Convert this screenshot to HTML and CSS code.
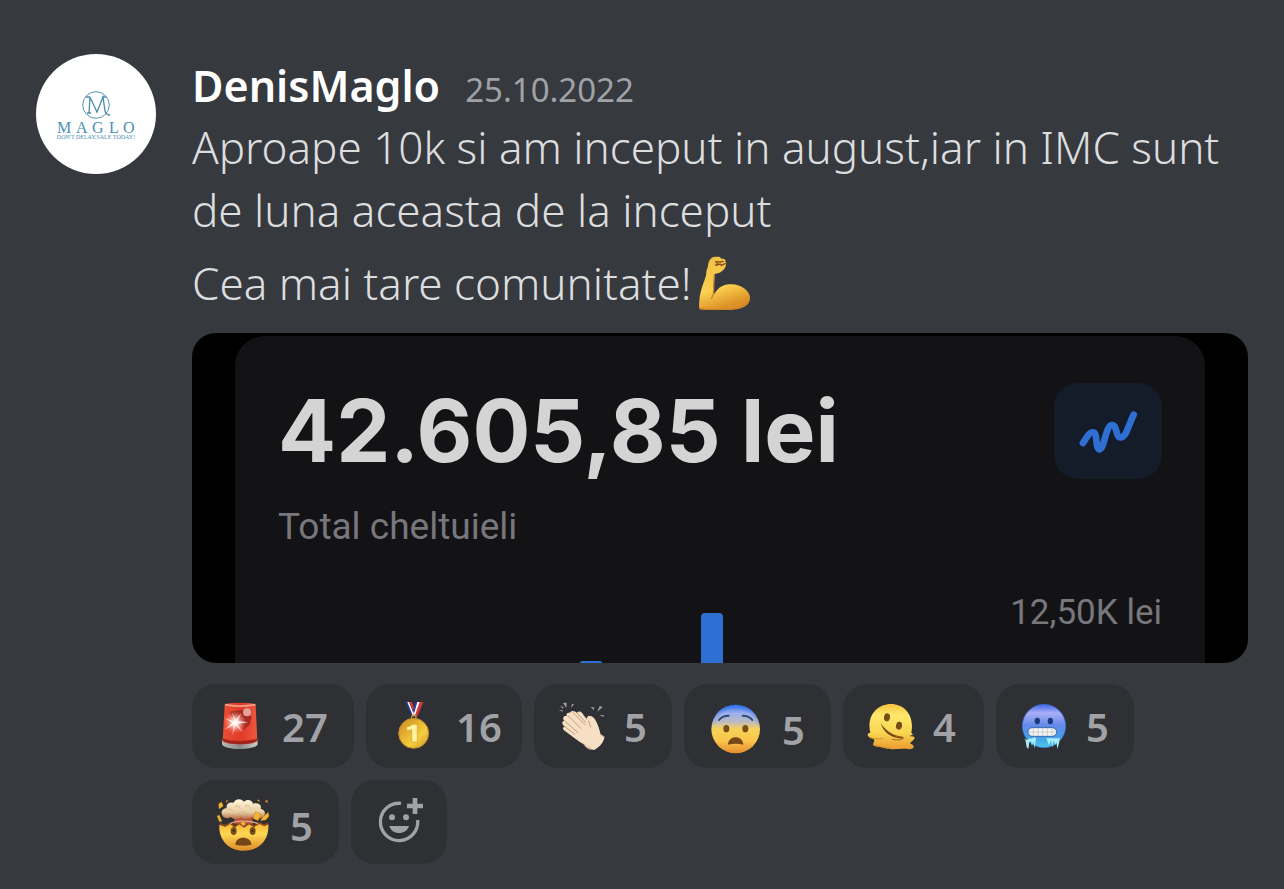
FILE: index.html
```
<!DOCTYPE html>
<html lang="ro">
<head>
  <meta charset="UTF-8" />
  <meta name="viewport" content="width=device-width, initial-scale=1.0"/>
  <title>DenisMaglo</title>
  <link rel="stylesheet" href="styles.css">
</head>
<body>
  <article class="message">
    <svg class="avatar" viewBox="0 0 120 120" role="img" aria-label="Maglo">
      <circle cx="60" cy="60" r="60" fill="#fff"/>
      <circle cx="60" cy="51" r="13.3" fill="none" stroke="#5b94b0" stroke-width="1"/>
      <path d="M51 59h4M53 59L54 43L61 58L67 43L69 57Q70 61 74 61M50 43h4M66 43h4" fill="none" stroke="#4f8dac" stroke-width="1.3"/>
      <g fill="#4a8fb5" font-family="Liberation Serif, serif">
        <text font-size="16" x="21 40 56 73 87" y="79">MAGLO</text>
        <text class="tagline" x="60" y="85" text-anchor="middle">DON'T DELAY,SALE TODAY!</text>
      </g>
    </svg>

    <div class="content">
      <header>
        <h1>DenisMaglo</h1>
        <time datetime="2022-10-25">25.10.2022</time>
      </header>
      <p>Aproape 10k si am inceput in august,iar in IMC sunt de luna aceasta de la inceput</p>
      <p class="last">Cea mai tare comunitate!<svg class="biceps" viewBox="0 0 162 162" role="img" aria-label="biceps">
        <defs>
          <linearGradient id="arm" x1="0" y1="0" x2="0.3" y2="1">
            <stop offset="0" stop-color="#f0bd45"/><stop offset=".65" stop-color="#fbd04f"/><stop offset="1" stop-color="#dc9127"/>
          </linearGradient>
        </defs>
        <path d="M30 30C31 15 38 2 52 2L64 2C68 4 67 8 74 8C82 8 84 13 82 18C87 21 84 26 83 31C80 40 68 53 50 54L48 66C47 85 44 102 46 116C54 111 60 87 94 85C128 82 155 104 156 124C157 154 124 161 92 162C57 163 28 160 6 160C2 157 3 148 4 135C6 99 22 72 25 53C24 43 28 40 30 30Z" fill="url(#arm)"/>
        <path d="M5 158C28 162 130 168 152 135" fill="none" stroke="#cf8125" stroke-width="4"/>
        <path d="M49 55L46 118M46 116L40 128" fill="none" stroke="#ca852a" stroke-width="4"/>
        <path d="M51 17L66 18L77 16M54 17L60 26L66 24L70 28L83 22M51 27L59 27" fill="none" stroke="#875018" stroke-width="4"/>
      </svg></p>

      <!-- attachment -->
      <div class="attachment">
        <div class="card">
          <div class="card-top">
            <div>
              <div class="amount">42.605,85 lei</div>
              <div class="caption">Total cheltuieli</div>
            </div>
            <div class="trend">
              <svg viewBox="0 0 324 288" aria-hidden="true">
                <path d="M87 180C98 165 105 146 118 148C132 151 123 200 137 199C152 197 154 128 174 126C191 125 183 166 202 163C218 160 222 128 239 95" fill="none" stroke="#2f6fd3" stroke-width="20" stroke-linecap="round" stroke-linejoin="round"/>
              </svg>
            </div>
          </div>
          <div class="chart">
            <div class="bar" style="height: 2px"></div>
            <div class="bar" style="height: 50px"></div>
            <span class="scale">12,50K lei</span>
          </div>
        </div>
      </div>

      <!-- reactions -->
      <div class="reactions">
        <button class="reaction two-digit" aria-label="sirena 27">
          <svg viewBox="0 0 144 144">
            <defs>
              <linearGradient id="red" x1="0" x2="1"><stop offset="0" stop-color="#ed4b32"/><stop offset=".55" stop-color="#df3c29"/><stop offset="1" stop-color="#ee5740"/></linearGradient>
              <linearGradient id="metal" x1="0" x2="1"><stop offset="0" stop-color="#b9bbb9"/><stop offset=".5" stop-color="#898b88"/><stop offset="1" stop-color="#d0d0cc"/></linearGradient>
              <radialGradient id="glow"><stop offset="0" stop-color="#fff"/><stop offset=".35" stop-color="#ffc8bd" stop-opacity=".9"/><stop offset="1" stop-color="#ff8070" stop-opacity="0"/></radialGradient>
            </defs>
            <path d="M18 113C30 126 110 126 124 113L125 126C121 146 22 146 18 126Z" fill="url(#metal)"/>
            <path d="M26 8Q28 2 72 2Q116 2 119 8L124 117C112 130 33 130 20 117Z" fill="url(#red)"/>
            <path d="M21 110Q70 124 123 110V117Q106 127 72 127Q37 127 20 117Z" fill="#9f261d"/>
            <path d="M27 8Q72 17 118 8" fill="none" stroke="#f39b85" stroke-width="5"/>
            <path d="M43 29L81 23L107 45L101 68L83 83L68 54L44 42Z" fill="#a42c24"/>
            <circle cx="93" cy="31" r="12" fill="#e6a19a"/>
            <circle cx="57" cy="61" r="34" fill="url(#glow)"/>
            <path d="M57 61L48 30L59 54L76 34L64 57L97 61L64 65L79 91L59 69L49 100L54 68L25 83L50 62L24 48L52 57Z" fill="#fff" opacity=".8"/>
          </svg>
          <span>27</span>
        </button>
        <button class="reaction medal" aria-label="medalie 16">
          <svg viewBox="0 0 144 144">
            <defs><linearGradient id="gold" x1="0" x2="1" y2="1"><stop offset="0" stop-color="#c98725"/><stop offset=".45" stop-color="#e9ba32"/><stop offset=".65" stop-color="#f5ce3d"/><stop offset="1" stop-color="#ca8e28"/></linearGradient></defs>
            <path d="M46 0H60L75 43H65Z" fill="#233b92"/>
            <path d="M52 0H57L73 39L70 44Z" fill="#fff"/>
            <path d="M58 0H66L77 32L73 41Z" fill="#d73535"/>
            <path d="M86 0H100L82 43H70Z" fill="#d73535"/>
            <path d="M80 0H89L75 40L70 34Z" fill="#fff"/>
            <path d="M76 0H82L73 32L69 25Z" fill="#2742a0"/>
            <rect x="65" y="40" width="13" height="12" rx="5" fill="none" stroke="#cb9c37" stroke-width="4"/>
            <circle cx="71" cy="94" r="45" fill="url(#gold)" stroke="#bd8a2d" stroke-width="3"/>
            <path d="M68 67H82V120H65V83L50 87V75Q60 74 68 67Z" fill="#fff3a0" stroke="#d29f2d" stroke-width="2"/>
          </svg>
          <span>16</span>
        </button>
        <button class="reaction" aria-label="aplauze 5">
          <svg viewBox="0 0 144 144">
            <path d="M15 3L26 2L25 18ZM42 5L48 7L39 18ZM6 11L16 15L15 21ZM2 24L14 25L14 29ZM98 15L108 16L107 25ZM125 12L134 15L118 29ZM124 39L138 40L137 45Z" fill="#a1a1a1"/>
            <path d="M75 56L86 56C84 45 91 37 101 44C114 55 124 75 127 97L139 105L133 120L113 142C99 146 82 138 77 127L61 84Z" fill="#ecd1b3"/>
            <path d="M35 32C43 23 51 28 57 33C64 23 72 31 76 38L91 57C91 47 96 40 103 44C117 53 121 77 128 97L139 105C137 123 122 138 107 143L86 128C74 128 62 117 53 111L20 86C11 80 16 74 21 74C10 66 11 57 19 57C12 48 17 39 27 43C23 37 27 31 35 32Z" fill="#f7dfc5"/>
            <path d="M57 33L83 61M44 31L81 68M31 42L69 79M21 58L60 92M21 74L50 97M92 57L98 75M127 97L139 105M78 126Q83 140 99 142" fill="none" stroke="#c69c7b" stroke-width="3" stroke-linecap="round"/>
          </svg>
          <span>5</span>
        </button>
        <button class="reaction large" aria-label="speriat 5">
          <svg viewBox="0 0 168 168">
            <defs>
              <linearGradient id="fear" x2="0" y2="1"><stop offset="0" stop-color="#3774ee"/><stop offset=".18" stop-color="#9eb0ed"/><stop offset=".35" stop-color="#bdb9c4"/><stop offset=".5" stop-color="#f5d457"/><stop offset=".75" stop-color="#fac44a"/><stop offset="1" stop-color="#e58b2d"/></linearGradient>
              <radialGradient id="edge"><stop offset=".8" stop-color="#3477ee" stop-opacity="0"/><stop offset="1" stop-color="#2868e5"/></radialGradient>
              <linearGradient id="fade" x2="0" y2="1"><stop offset="0" stop-color="#fff"/><stop offset=".45" stop-color="#000"/></linearGradient>
              <mask id="top"><rect width="168" height="168" fill="url(#fade)"/></mask>
            </defs>
            <circle cx="83" cy="84" r="73" fill="url(#fear)"/>
            <circle cx="83" cy="84" r="73" fill="url(#edge)" mask="url(#top)"/>
            <path d="M33 57Q42 44 62 44M104 44Q124 44 133 57" fill="none" stroke="#284d79" stroke-width="6" stroke-linecap="round"/>
            <ellipse cx="55" cy="83" rx="9" ry="11" fill="#7b4b1a"/><ellipse cx="112" cy="83" rx="9" ry="11" fill="#7b4b1a"/>
            <path d="M60 131C60 101 106 101 106 131Q83 126 60 131Z" fill="#784718"/>
          </svg>
          <span>5</span>
        </button>
        <button class="reaction melting" aria-label="topit 4">
          <svg viewBox="0 0 144 144">
            <defs>
              <linearGradient id="yellow" x2="0" y2="1"><stop offset="0" stop-color="#f5c13e"/><stop offset=".25" stop-color="#ffe96c"/><stop offset=".65" stop-color="#f8d450"/><stop offset="1" stop-color="#e99a31"/></linearGradient>
            </defs>
            <path d="M10 93C1 91-1 102 7 106C22 110 25 115 19 124C14 136 32 131 51 138C76 146 101 137 126 142C143 142 144 131 132 126C125 122 139 117 142 110C145 101 134 104 127 102L138 98L133 92C143 43 114 6 72 6C29 6 -2 43 10 93Z" fill="url(#yellow)"/>
            <path d="M7 106C24 114 44 108 49 111M20 129Q48 137 62 137" fill="none" stroke="#dd8b25" stroke-width="3"/>
            <path d="M41 64C50 94 76 109 106 110C112 110 111 104 105 104C77 101 57 87 41 64Z" fill="#744519"/>
            <path d="M85 104Q112 105 108 110Q101 117 75 112" fill="none" stroke="#ad6d1c" stroke-width="3"/>
            <ellipse cx="60" cy="46" rx="9" ry="12" transform="rotate(12 60 46)" fill="#784c19"/><ellipse cx="96" cy="71" rx="9" ry="12" transform="rotate(12 96 71)" fill="#784c19"/>
          </svg>
          <span>4</span>
        </button>
        <button class="reaction" aria-label="inghetat 5">
          <svg viewBox="0 0 144 144">
            <defs><linearGradient id="cold" x2="0" y2="1"><stop offset="0" stop-color="#3e66e9"/><stop offset=".2" stop-color="#aaaff7"/><stop offset=".48" stop-color="#6688ea"/><stop offset=".75" stop-color="#459eea"/><stop offset="1" stop-color="#4bc8e3"/></linearGradient></defs>
            <circle cx="72" cy="72" r="65" fill="url(#cold)" stroke="#3a70da" stroke-width="2"/>
            <ellipse cx="52" cy="57" rx="8" ry="10" fill="#153e7b"/><ellipse cx="91" cy="57" rx="8" ry="10" fill="#153e7b"/>
            <path d="M13 109Q20 118 28 109Q36 113 43 106L48 108L44 140L40 117L36 133L33 118L28 120L25 141L20 136L17 118ZM79 109H119L117 124L112 141L109 119L105 130L101 113L97 136L93 115L87 130Z" fill="#a9eefa"/>
            <rect x="24" y="77" width="86" height="26" rx="13" fill="#f4f5f3" stroke="#356bab" stroke-width="3"/>
            <path d="M26 90H109M40 79V102M54 79V102M68 79V102M82 79V102M96 79V102" stroke="#b8bab9" stroke-width="2"/>
          </svg>
          <span>5</span>
        </button>
        <button class="reaction large" aria-label="uimit 5">
          <svg viewBox="0 0 168 168">
            <defs>
              <linearGradient id="face" x2="0" y2="1"><stop offset="0" stop-color="#f2b632"/><stop offset=".4" stop-color="#ffd753"/><stop offset="1" stop-color="#dc8b28"/></linearGradient>
              <linearGradient id="cloud" x2="0" y2="1"><stop offset="0" stop-color="#fff6dc"/><stop offset=".65" stop-color="#e7cca0"/><stop offset="1" stop-color="#b66c47"/></linearGradient>
            </defs>
            <path d="M10 83L28 89L43 79L55 91L70 80L84 91L99 80L114 90L131 78L144 86L157 82C160 130 128 161 83 161C37 161 7 127 10 83Z" fill="url(#face)"/>
            <path d="M12 80L27 86L43 78L56 89L70 79L84 89L99 79L114 87L130 78L145 85L156 79" fill="none" stroke="#94451f" stroke-width="5"/>
            <path d="M57 60H108L112 80H53Z" fill="#bb5538"/>
            <path d="M43 80C58 70 105 70 126 80" fill="none" stroke="#d5b195" stroke-width="4"/>
            <path d="M24 61C10 49 18 34 32 34C29 18 46 14 52 18C60 2 79 6 83 14C96 4 109 11 111 20C127 16 138 24 134 35C150 38 151 55 137 62Q121 72 106 60Q90 71 75 61Q54 71 44 60Q35 67 24 61Z" fill="url(#cloud)"/>
            <path d="M35 38Q46 32 51 43M57 28Q68 23 74 35M87 27Q98 22 103 35M70 48Q82 39 91 50" fill="none" stroke="#d9b98c" stroke-width="3"/>
            <path d="M8 20L17 15L22 27L9 36ZM30 12L36 9L32 17ZM123 10L129 8L131 14ZM147 13L154 9L154 17ZM3 57L10 54L18 73L10 74ZM118 44L135 51L126 71L112 65ZM142 58L157 46L159 58L149 69L133 71ZM73 78L83 72L90 82L81 87Z" fill="#f4b52e" stroke="#b77320" stroke-width="1"/>
            <ellipse cx="53" cy="102" rx="9" ry="12" fill="#79501b"/><ellipse cx="110" cy="102" rx="9" ry="12" fill="#79501b"/>
            <circle cx="53" cy="101" r="3" fill="#2f2110"/><circle cx="110" cy="101" r="3" fill="#2f2110"/>
            <path d="M58 143C57 115 106 115 106 143Q82 149 58 143Z" fill="#774618"/>
          </svg>
          <span>5</span>
        </button>
        <button class="reaction add" aria-label="Adauga reactie">
          <svg viewBox="0 0 144 144">
            <path d="M78 16A56 56 0 1 0 128 66" fill="none" stroke="#a0a2a6" stroke-width="10"/>
            <path d="M113 0H127V17H144V31H127V48H113V31H96V17H113Z" fill="#a0a2a6"/>
            <circle cx="51" cy="58" r="9" fill="#a0a2a6"/><circle cx="93" cy="58" r="9" fill="#a0a2a6"/>
            <path d="M43 84H102C98 98 86 105 72 105S47 98 43 84Z" fill="#a0a2a6"/>
          </svg>
        </button>
      </div>
    </div>
  </article>
</body>
</html>
```
FILE: styles.css
```
* {
  box-sizing: border-box;
}
body {
  margin: 0;
  background: #36393e;
  color: #dcddde;
  font-family: 'Noto Sans', 'Open Sans', sans-serif;
}
.message {
  display: flex;
  gap: 36px;
  padding: 54px 36px 24px;
}
.avatar {
  width: 120px;
  height: 120px;
  flex-shrink: 0;
}
.tagline {
  font-size: 6px;
}
.content {
  flex: 1;
  min-width: 0;
}
header {
  display: flex;
  align-items: baseline;
  gap: 25px;
  padding-top: 6px;
  line-height: 52px;
}
h1 {
  margin: 0;
  color: #fff;
  font-size: 43px;
  font-weight: 600;
}
time {
  color: #a0a2a6;
  font-size: 33px;
}
p {
  margin: 0;
  font-size: 44px;
  font-weight: 300;
  line-height: 63px;
}
.last {
  display: flex;
  align-items: center;
  gap: 6px;
  line-height: 72px;
  margin: 5px 0 14px;
}
.biceps {
  width: 54px;
  height: 54px;
}
.attachment {
  background: #000;
  border-radius: 24px;
  overflow: hidden;
  padding: 3px 43px 0;
}
.card {
  background: #131316;
  border-radius: 30px 30px 0 0;
  padding: 47px 43px 0;
}
.card-top {
  display: flex;
  justify-content: space-between;
}
.amount {
  color: #d4d4d4;
  font-family: Inter, sans-serif;
  font-size: 86px;
  font-weight: 700;
  line-height: 96px;
}
.caption, .scale {
  color: #78777c;
  font-family: Roboto, sans-serif;
  font-size: 37px;
  line-height: 48px;
}
.caption {
  margin-top: 24px;
}
.trend {
  width: 108px;
  height: 96px;
  background: #141c2a;
  border-radius: 24px;
}
.trend svg {
  display: block;
  width: 100%;
}
.chart {
  display: flex;
  align-items: flex-end;
  gap: 99px;
  height: 74px;
  margin-top: 38px;
  padding-left: 302px;
}
.bar {
  width: 22px;
  background: #2f6fd3;
  border-radius: 4px 4px 0 0;
}
.scale {
  align-self: flex-start;
  margin-left: auto;
  font-size: 35px;
}
.reactions {
  display: flex;
  flex-wrap: wrap;
  gap: 12px;
  margin-top: 21px;
}
.reaction {
  display: flex;
  align-items: center;
  gap: 18px;
  height: 84px;
  min-width: 138px;
  padding: 0 24px;
  border: none;
  border-radius: 24px;
  background: #2f3033;
  color: #a0a2a6;
  font-family: inherit;
  font-size: 40px;
  font-weight: 600;
  cursor: pointer;
}
.reaction svg {
  width: 48px;
  height: 48px;
  flex-shrink: 0;
}
.two-digit {
  width: 162px;
}
.medal {
  width: 156px;
}
.melting {
  width: 141px;
}
.large {
  width: 147px;
  padding-top: 6px;
}
.large svg {
  width: 56px;
  height: 56px;
}
.add {
  min-width: 96px;
}
```
